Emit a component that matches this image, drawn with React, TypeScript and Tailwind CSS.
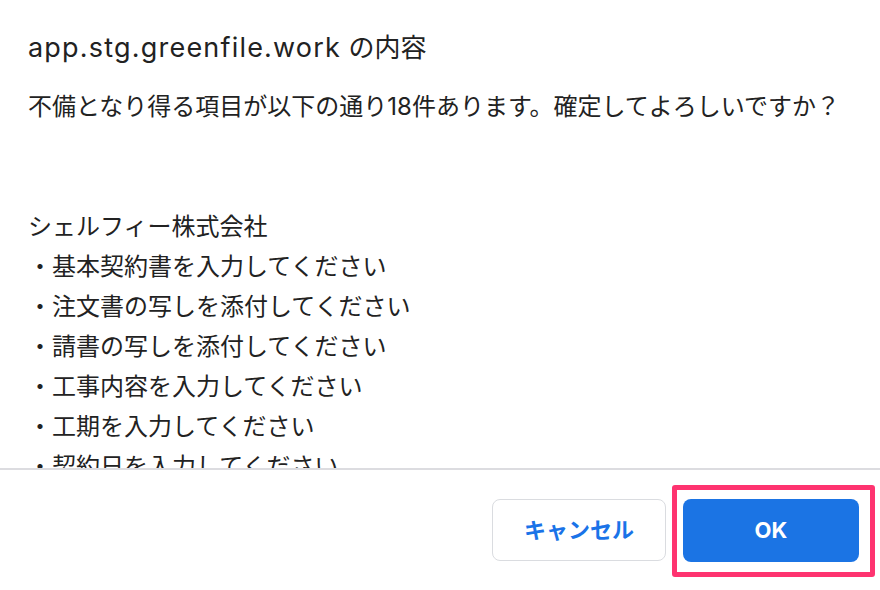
import React from "react";

const items = [
  "シェルフィー株式会社",
  "・基本契約書を入力してください",
  "・注文書の写しを添付してください",
  "・請書の写しを添付してください",
  "・工事内容を入力してください",
  "・工期を入力してください",
  "・契約日を入力してください",
  "・契約金額を入力してください",
];

const App: React.FC = () => {
  return (
    <div
      className="w-[880px] h-[590px] bg-white flex flex-col overflow-hidden text-[#222222]"
      style={{ fontFamily: 'Inter, "Noto Sans CJK JP", sans-serif' }}
    >
      <h1 className="mt-[32px] px-[28px] text-[26px] leading-[32px] font-normal whitespace-nowrap">
        <span className="text-[27px] tracking-[1.2px]">app.stg.greenfile.work</span> の内容
      </h1>
      <div className="mt-[23px] px-[28px] h-[381px] overflow-hidden text-[24px] leading-[40px]">
        <p>不備となり得る項目が以下の通り18件あります。確定してよろしいですか？</p>
        <p>&nbsp;</p>
        <p>&nbsp;</p>
        {items.map((item, index) => (
          <p key={index}>{item}</p>
        ))}
      </div>
      <div className="flex-1 border-t-[2px] border-[#dcdce0] flex items-center justify-end gap-[17px] pr-[21px]">
        <button className="w-[174px] h-[62px] rounded-[8px] border border-[#dadce0] bg-white text-[#1a73e8] text-[22px] font-bold">
          キャンセル
        </button>
        <div className="relative">
          <button className="w-[176px] h-[63px] rounded-[8px] bg-[#1b74e4] text-white text-[22px] font-bold">
            OK
          </button>
          <div className="absolute -left-[11px] -top-[14px] -right-[16px] -bottom-[15px] border-[5px] border-[#fe3370] rounded-[3px] pointer-events-none" />
        </div>
      </div>
    </div>
  );
};

export default App;
